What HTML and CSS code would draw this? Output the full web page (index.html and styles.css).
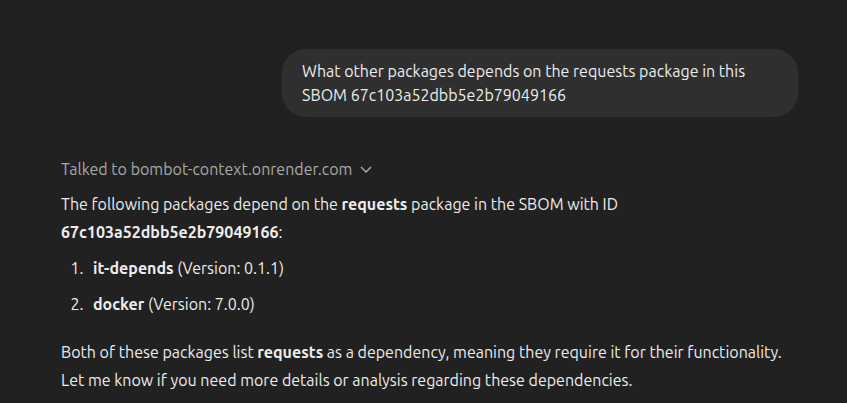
FILE: index.html
```html
<!DOCTYPE html>
<html lang="en">
<head>
<meta charset="utf-8">
<title>Chat</title>
<link rel="stylesheet" href="styles.css">
</head>
<body>
<main class="thread">
  <p class="bubble">What other packages depends on the requests package in this SBOM 67c103a52dbb5e2b79049166</p>
  <article class="reply">
    <button class="source" type="button">Talked to bombot-context.onrender.com
      <svg class="chevron" viewBox="0 0 12 12" aria-hidden="true"><path d="M1 4 6 9 11 4"/></svg>
    </button>
    <p>The following packages depend on the <strong>requests</strong> package in the SBOM with ID <strong>67c103a52dbb5e2b79049166</strong>:</p>
    <ol>
      <li><strong>it-depends</strong> (Version: 0.1.1)</li>
      <li><strong>docker</strong> (Version: 7.0.0)</li>
    </ol>
    <p>Both of these packages list <strong>requests</strong> as a dependency, meaning they require it for their functionality. Let me know if you need more details or analysis regarding these dependencies.</p>
  </article>
</main>
</body>
</html>
```
FILE: styles.css
```css
* {
  box-sizing: border-box;
}

body {
  margin: 0;
  background: #212121;
  color: #ececec;
  font: 16px/28px Ubuntu, "Noto Sans", "Open Sans", sans-serif;
}

.thread {
  display: flex;
  flex-direction: column;
  padding: 49px 49px 8px 61px;
}

.bubble {
  align-self: flex-end;
  width: 70%;
  margin: 0;
  padding: 10px 20px;
  border-radius: 24px;
  background: #2f2f2f;
  line-height: 24px;
}

.reply {
  margin-top: 40px;
}

.reply p {
  margin: 0;
}

.source {
  display: flex;
  align-items: center;
  gap: 8px;
  margin: 0 0 9px;
  padding: 0;
  border: 0;
  background: none;
  color: #a8a8a8;
  font: inherit;
  line-height: 24px;
}

.chevron {
  width: 12px;
  height: 12px;
  fill: none;
  stroke: currentColor;
  stroke-width: 1.5;
}

ol {
  margin: 8px 0 20px;
  padding-left: 26px;
}

li {
  padding-left: 6px;
}

li + li {
  margin-top: 8px;
}
```
